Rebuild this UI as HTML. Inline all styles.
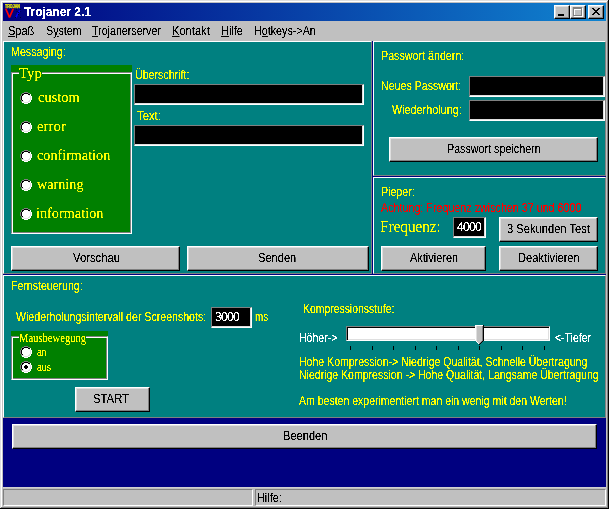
<!DOCTYPE html>
<html lang="de"><head><meta charset="utf-8"><title>Trojaner 2.1</title>
<style>
html,body{margin:0;padding:0}
body{width:609px;height:509px;overflow:hidden;background:#c0c0c0;position:relative;font-family:"Liberation Sans",sans-serif}
.a{position:absolute;box-sizing:border-box}
.t{position:absolute;white-space:nowrap;line-height:20px;transform-origin:0 0}
.p{position:absolute;box-sizing:border-box;background:#008080;border:1px solid;border-color:#fff #808080 #808080 #fff}
.b{position:absolute;box-sizing:border-box;background:#c0c0c0;border:1px solid;border-color:#fff #000 #000 #fff;box-shadow:inset -1px -1px 0 #808080,inset 1px 1px 0 #dfdfdf}
.e{position:absolute;box-sizing:border-box;background:#000;border:1px solid;border-color:#808080 #fff #fff #808080;box-shadow:inset -1px -1px 0 #dfdfdf,inset 1px 1px 0 #000}
.g{position:absolute;box-sizing:border-box;background:#008000}
.f{position:absolute;box-sizing:border-box;border:1px solid;border-color:#808080 #fff #fff #808080;box-shadow:inset 1px 1px 0 #fff,inset -1px -1px 0 #808080}
.sp{position:absolute;box-sizing:border-box;border:1px solid;border-color:#808080 #fff #fff #808080}
u{text-decoration:underline}
</style></head><body>

<div class="a" style="left:0;top:0;width:609px;height:509px;background:#000"></div>
<div class="a" style="left:0;top:0;width:608px;height:508px;background:#dfdfdf"></div>
<div class="a" style="left:1px;top:1px;width:607px;height:507px;background:#808080"></div>
<div class="a" style="left:1px;top:1px;width:606px;height:506px;background:#fff"></div>
<div class="a" style="left:2px;top:2px;width:605px;height:505px;background:#c0c0c0"></div>
<div class="a" style="left:3px;top:3px;width:603px;height:18px;background:linear-gradient(to right,#000080,#1084d0)"></div>
<svg class="a" style="left:5px;top:4px" width="16" height="16" viewBox="0 0 16 16"><text x="0" y="3.9" font-family="Liberation Sans, sans-serif" font-weight="bold" font-size="5.2" fill="#ffff00" stroke="#e0e000" stroke-width="0.35" opacity="0.99" textLength="15" lengthAdjust="spacingAndGlyphs">TROJAN</text><path d="M0.7 4.6 L4.5 13.4 L8.3 4.6" stroke="#ff0000" stroke-width="1.7" fill="none" stroke-linejoin="bevel"/><path d="M14.8 6.3 L10.7 13.7" stroke="#0000ff" stroke-width="1.6" fill="none"/><path d="M11 5.5h1M15 5.5h1M11.5 7.5h1M15.5 7.5h1M13 8.5h1M13 10.5h1M10 13.5h1M15 13.5h1" stroke="#000030" stroke-width="1" fill="none"/></svg>
<div class="b" style="left:554px;top:5px;width:16px;height:14px"></div>
<div class="b" style="left:570px;top:5px;width:16px;height:14px"></div>
<div class="b" style="left:588px;top:5px;width:16px;height:14px"></div>
<div class="a" style="left:558px;top:14px;width:6px;height:2px;background:#000"></div>
<div class="a" style="left:574px;top:8px;width:9px;height:9px;border:1px solid #fff;border-top-width:2px"></div>
<div class="a" style="left:573px;top:7px;width:9px;height:9px;border:1px solid #808080;border-top-width:2px"></div>
<svg class="a" style="left:592px;top:8px" width="8" height="7" viewBox="0 0 8 7" shape-rendering="crispEdges"><path d="M0 0h2v1h-2zM6 0h2v1h-2zM1 1h2v1h-2zM5 1h2v1h-2zM2 2h4v1h-4zM3 3h2v1h-2zM2 4h4v1h-4zM1 5h2v1h-2zM5 5h2v1h-2zM0 6h2v1h-2zM6 6h2v1h-2z" fill="#000"/></svg>
<div class="a" style="left:3px;top:41px;width:603px;height:465px;background:#000080"></div>
<div class="p" style="left:3px;top:41px;width:369px;height:233px"></div>
<div class="p" style="left:373px;top:41px;width:233px;height:135px"></div>
<div class="p" style="left:373px;top:177px;width:233px;height:97px"></div>
<div class="p" style="left:3px;top:275px;width:603px;height:143px"></div>
<div class="g" style="left:11px;top:65px;width:121px;height:169px"></div>
<div class="f" style="left:11px;top:72px;width:121px;height:162px"></div>
<div class="a" style="left:19px;top:72px;width:23px;height:2px;background:#008000"></div>
<svg class="a" style="left:20px;top:92px" width="12" height="12" viewBox="0 0 12 12" shape-rendering="crispEdges"><rect x="4" y="2" width="4" height="1" fill="#fff"/><rect x="3" y="3" width="6" height="1" fill="#fff"/><rect x="2" y="4" width="8" height="1" fill="#fff"/><rect x="2" y="5" width="8" height="1" fill="#fff"/><rect x="2" y="6" width="8" height="1" fill="#fff"/><rect x="2" y="7" width="8" height="1" fill="#fff"/><rect x="3" y="8" width="6" height="1" fill="#fff"/><rect x="4" y="9" width="4" height="1" fill="#fff"/><rect x="4" y="0" width="4" height="1" fill="#808080"/><rect x="2" y="1" width="2" height="1" fill="#808080"/><rect x="8" y="1" width="2" height="1" fill="#808080"/><rect x="1" y="2" width="1" height="1" fill="#808080"/><rect x="1" y="3" width="1" height="1" fill="#808080"/><rect x="0" y="4" width="1" height="1" fill="#808080"/><rect x="0" y="5" width="1" height="1" fill="#808080"/><rect x="0" y="6" width="1" height="1" fill="#808080"/><rect x="0" y="7" width="1" height="1" fill="#808080"/><rect x="1" y="8" width="1" height="1" fill="#808080"/><rect x="1" y="9" width="1" height="1" fill="#808080"/><rect x="4" y="1" width="4" height="1" fill="#000"/><rect x="2" y="2" width="2" height="1" fill="#000"/><rect x="8" y="2" width="2" height="1" fill="#000"/><rect x="2" y="3" width="1" height="1" fill="#000"/><rect x="1" y="4" width="1" height="1" fill="#000"/><rect x="1" y="5" width="1" height="1" fill="#000"/><rect x="1" y="6" width="1" height="1" fill="#000"/><rect x="1" y="7" width="1" height="1" fill="#000"/><rect x="2" y="8" width="1" height="1" fill="#000"/><rect x="10" y="2" width="1" height="1" fill="#fff"/><rect x="10" y="3" width="1" height="1" fill="#fff"/><rect x="11" y="4" width="1" height="1" fill="#fff"/><rect x="11" y="5" width="1" height="1" fill="#fff"/><rect x="11" y="6" width="1" height="1" fill="#fff"/><rect x="11" y="7" width="1" height="1" fill="#fff"/><rect x="10" y="8" width="1" height="1" fill="#fff"/><rect x="10" y="9" width="1" height="1" fill="#fff"/><rect x="2" y="10" width="2" height="1" fill="#fff"/><rect x="8" y="10" width="2" height="1" fill="#fff"/><rect x="4" y="11" width="4" height="1" fill="#fff"/><rect x="9" y="3" width="1" height="1" fill="#dfdfdf"/><rect x="10" y="4" width="1" height="1" fill="#dfdfdf"/><rect x="10" y="5" width="1" height="1" fill="#dfdfdf"/><rect x="10" y="6" width="1" height="1" fill="#dfdfdf"/><rect x="10" y="7" width="1" height="1" fill="#dfdfdf"/><rect x="9" y="8" width="1" height="1" fill="#dfdfdf"/><rect x="2" y="9" width="2" height="1" fill="#dfdfdf"/><rect x="8" y="9" width="2" height="1" fill="#dfdfdf"/><rect x="4" y="10" width="4" height="1" fill="#dfdfdf"/></svg>
<svg class="a" style="left:20px;top:121px" width="12" height="12" viewBox="0 0 12 12" shape-rendering="crispEdges"><rect x="4" y="2" width="4" height="1" fill="#fff"/><rect x="3" y="3" width="6" height="1" fill="#fff"/><rect x="2" y="4" width="8" height="1" fill="#fff"/><rect x="2" y="5" width="8" height="1" fill="#fff"/><rect x="2" y="6" width="8" height="1" fill="#fff"/><rect x="2" y="7" width="8" height="1" fill="#fff"/><rect x="3" y="8" width="6" height="1" fill="#fff"/><rect x="4" y="9" width="4" height="1" fill="#fff"/><rect x="4" y="0" width="4" height="1" fill="#808080"/><rect x="2" y="1" width="2" height="1" fill="#808080"/><rect x="8" y="1" width="2" height="1" fill="#808080"/><rect x="1" y="2" width="1" height="1" fill="#808080"/><rect x="1" y="3" width="1" height="1" fill="#808080"/><rect x="0" y="4" width="1" height="1" fill="#808080"/><rect x="0" y="5" width="1" height="1" fill="#808080"/><rect x="0" y="6" width="1" height="1" fill="#808080"/><rect x="0" y="7" width="1" height="1" fill="#808080"/><rect x="1" y="8" width="1" height="1" fill="#808080"/><rect x="1" y="9" width="1" height="1" fill="#808080"/><rect x="4" y="1" width="4" height="1" fill="#000"/><rect x="2" y="2" width="2" height="1" fill="#000"/><rect x="8" y="2" width="2" height="1" fill="#000"/><rect x="2" y="3" width="1" height="1" fill="#000"/><rect x="1" y="4" width="1" height="1" fill="#000"/><rect x="1" y="5" width="1" height="1" fill="#000"/><rect x="1" y="6" width="1" height="1" fill="#000"/><rect x="1" y="7" width="1" height="1" fill="#000"/><rect x="2" y="8" width="1" height="1" fill="#000"/><rect x="10" y="2" width="1" height="1" fill="#fff"/><rect x="10" y="3" width="1" height="1" fill="#fff"/><rect x="11" y="4" width="1" height="1" fill="#fff"/><rect x="11" y="5" width="1" height="1" fill="#fff"/><rect x="11" y="6" width="1" height="1" fill="#fff"/><rect x="11" y="7" width="1" height="1" fill="#fff"/><rect x="10" y="8" width="1" height="1" fill="#fff"/><rect x="10" y="9" width="1" height="1" fill="#fff"/><rect x="2" y="10" width="2" height="1" fill="#fff"/><rect x="8" y="10" width="2" height="1" fill="#fff"/><rect x="4" y="11" width="4" height="1" fill="#fff"/><rect x="9" y="3" width="1" height="1" fill="#dfdfdf"/><rect x="10" y="4" width="1" height="1" fill="#dfdfdf"/><rect x="10" y="5" width="1" height="1" fill="#dfdfdf"/><rect x="10" y="6" width="1" height="1" fill="#dfdfdf"/><rect x="10" y="7" width="1" height="1" fill="#dfdfdf"/><rect x="9" y="8" width="1" height="1" fill="#dfdfdf"/><rect x="2" y="9" width="2" height="1" fill="#dfdfdf"/><rect x="8" y="9" width="2" height="1" fill="#dfdfdf"/><rect x="4" y="10" width="4" height="1" fill="#dfdfdf"/></svg>
<svg class="a" style="left:20px;top:150px" width="12" height="12" viewBox="0 0 12 12" shape-rendering="crispEdges"><rect x="4" y="2" width="4" height="1" fill="#fff"/><rect x="3" y="3" width="6" height="1" fill="#fff"/><rect x="2" y="4" width="8" height="1" fill="#fff"/><rect x="2" y="5" width="8" height="1" fill="#fff"/><rect x="2" y="6" width="8" height="1" fill="#fff"/><rect x="2" y="7" width="8" height="1" fill="#fff"/><rect x="3" y="8" width="6" height="1" fill="#fff"/><rect x="4" y="9" width="4" height="1" fill="#fff"/><rect x="4" y="0" width="4" height="1" fill="#808080"/><rect x="2" y="1" width="2" height="1" fill="#808080"/><rect x="8" y="1" width="2" height="1" fill="#808080"/><rect x="1" y="2" width="1" height="1" fill="#808080"/><rect x="1" y="3" width="1" height="1" fill="#808080"/><rect x="0" y="4" width="1" height="1" fill="#808080"/><rect x="0" y="5" width="1" height="1" fill="#808080"/><rect x="0" y="6" width="1" height="1" fill="#808080"/><rect x="0" y="7" width="1" height="1" fill="#808080"/><rect x="1" y="8" width="1" height="1" fill="#808080"/><rect x="1" y="9" width="1" height="1" fill="#808080"/><rect x="4" y="1" width="4" height="1" fill="#000"/><rect x="2" y="2" width="2" height="1" fill="#000"/><rect x="8" y="2" width="2" height="1" fill="#000"/><rect x="2" y="3" width="1" height="1" fill="#000"/><rect x="1" y="4" width="1" height="1" fill="#000"/><rect x="1" y="5" width="1" height="1" fill="#000"/><rect x="1" y="6" width="1" height="1" fill="#000"/><rect x="1" y="7" width="1" height="1" fill="#000"/><rect x="2" y="8" width="1" height="1" fill="#000"/><rect x="10" y="2" width="1" height="1" fill="#fff"/><rect x="10" y="3" width="1" height="1" fill="#fff"/><rect x="11" y="4" width="1" height="1" fill="#fff"/><rect x="11" y="5" width="1" height="1" fill="#fff"/><rect x="11" y="6" width="1" height="1" fill="#fff"/><rect x="11" y="7" width="1" height="1" fill="#fff"/><rect x="10" y="8" width="1" height="1" fill="#fff"/><rect x="10" y="9" width="1" height="1" fill="#fff"/><rect x="2" y="10" width="2" height="1" fill="#fff"/><rect x="8" y="10" width="2" height="1" fill="#fff"/><rect x="4" y="11" width="4" height="1" fill="#fff"/><rect x="9" y="3" width="1" height="1" fill="#dfdfdf"/><rect x="10" y="4" width="1" height="1" fill="#dfdfdf"/><rect x="10" y="5" width="1" height="1" fill="#dfdfdf"/><rect x="10" y="6" width="1" height="1" fill="#dfdfdf"/><rect x="10" y="7" width="1" height="1" fill="#dfdfdf"/><rect x="9" y="8" width="1" height="1" fill="#dfdfdf"/><rect x="2" y="9" width="2" height="1" fill="#dfdfdf"/><rect x="8" y="9" width="2" height="1" fill="#dfdfdf"/><rect x="4" y="10" width="4" height="1" fill="#dfdfdf"/></svg>
<svg class="a" style="left:20px;top:179px" width="12" height="12" viewBox="0 0 12 12" shape-rendering="crispEdges"><rect x="4" y="2" width="4" height="1" fill="#fff"/><rect x="3" y="3" width="6" height="1" fill="#fff"/><rect x="2" y="4" width="8" height="1" fill="#fff"/><rect x="2" y="5" width="8" height="1" fill="#fff"/><rect x="2" y="6" width="8" height="1" fill="#fff"/><rect x="2" y="7" width="8" height="1" fill="#fff"/><rect x="3" y="8" width="6" height="1" fill="#fff"/><rect x="4" y="9" width="4" height="1" fill="#fff"/><rect x="4" y="0" width="4" height="1" fill="#808080"/><rect x="2" y="1" width="2" height="1" fill="#808080"/><rect x="8" y="1" width="2" height="1" fill="#808080"/><rect x="1" y="2" width="1" height="1" fill="#808080"/><rect x="1" y="3" width="1" height="1" fill="#808080"/><rect x="0" y="4" width="1" height="1" fill="#808080"/><rect x="0" y="5" width="1" height="1" fill="#808080"/><rect x="0" y="6" width="1" height="1" fill="#808080"/><rect x="0" y="7" width="1" height="1" fill="#808080"/><rect x="1" y="8" width="1" height="1" fill="#808080"/><rect x="1" y="9" width="1" height="1" fill="#808080"/><rect x="4" y="1" width="4" height="1" fill="#000"/><rect x="2" y="2" width="2" height="1" fill="#000"/><rect x="8" y="2" width="2" height="1" fill="#000"/><rect x="2" y="3" width="1" height="1" fill="#000"/><rect x="1" y="4" width="1" height="1" fill="#000"/><rect x="1" y="5" width="1" height="1" fill="#000"/><rect x="1" y="6" width="1" height="1" fill="#000"/><rect x="1" y="7" width="1" height="1" fill="#000"/><rect x="2" y="8" width="1" height="1" fill="#000"/><rect x="10" y="2" width="1" height="1" fill="#fff"/><rect x="10" y="3" width="1" height="1" fill="#fff"/><rect x="11" y="4" width="1" height="1" fill="#fff"/><rect x="11" y="5" width="1" height="1" fill="#fff"/><rect x="11" y="6" width="1" height="1" fill="#fff"/><rect x="11" y="7" width="1" height="1" fill="#fff"/><rect x="10" y="8" width="1" height="1" fill="#fff"/><rect x="10" y="9" width="1" height="1" fill="#fff"/><rect x="2" y="10" width="2" height="1" fill="#fff"/><rect x="8" y="10" width="2" height="1" fill="#fff"/><rect x="4" y="11" width="4" height="1" fill="#fff"/><rect x="9" y="3" width="1" height="1" fill="#dfdfdf"/><rect x="10" y="4" width="1" height="1" fill="#dfdfdf"/><rect x="10" y="5" width="1" height="1" fill="#dfdfdf"/><rect x="10" y="6" width="1" height="1" fill="#dfdfdf"/><rect x="10" y="7" width="1" height="1" fill="#dfdfdf"/><rect x="9" y="8" width="1" height="1" fill="#dfdfdf"/><rect x="2" y="9" width="2" height="1" fill="#dfdfdf"/><rect x="8" y="9" width="2" height="1" fill="#dfdfdf"/><rect x="4" y="10" width="4" height="1" fill="#dfdfdf"/></svg>
<svg class="a" style="left:20px;top:208px" width="12" height="12" viewBox="0 0 12 12" shape-rendering="crispEdges"><rect x="4" y="2" width="4" height="1" fill="#fff"/><rect x="3" y="3" width="6" height="1" fill="#fff"/><rect x="2" y="4" width="8" height="1" fill="#fff"/><rect x="2" y="5" width="8" height="1" fill="#fff"/><rect x="2" y="6" width="8" height="1" fill="#fff"/><rect x="2" y="7" width="8" height="1" fill="#fff"/><rect x="3" y="8" width="6" height="1" fill="#fff"/><rect x="4" y="9" width="4" height="1" fill="#fff"/><rect x="4" y="0" width="4" height="1" fill="#808080"/><rect x="2" y="1" width="2" height="1" fill="#808080"/><rect x="8" y="1" width="2" height="1" fill="#808080"/><rect x="1" y="2" width="1" height="1" fill="#808080"/><rect x="1" y="3" width="1" height="1" fill="#808080"/><rect x="0" y="4" width="1" height="1" fill="#808080"/><rect x="0" y="5" width="1" height="1" fill="#808080"/><rect x="0" y="6" width="1" height="1" fill="#808080"/><rect x="0" y="7" width="1" height="1" fill="#808080"/><rect x="1" y="8" width="1" height="1" fill="#808080"/><rect x="1" y="9" width="1" height="1" fill="#808080"/><rect x="4" y="1" width="4" height="1" fill="#000"/><rect x="2" y="2" width="2" height="1" fill="#000"/><rect x="8" y="2" width="2" height="1" fill="#000"/><rect x="2" y="3" width="1" height="1" fill="#000"/><rect x="1" y="4" width="1" height="1" fill="#000"/><rect x="1" y="5" width="1" height="1" fill="#000"/><rect x="1" y="6" width="1" height="1" fill="#000"/><rect x="1" y="7" width="1" height="1" fill="#000"/><rect x="2" y="8" width="1" height="1" fill="#000"/><rect x="10" y="2" width="1" height="1" fill="#fff"/><rect x="10" y="3" width="1" height="1" fill="#fff"/><rect x="11" y="4" width="1" height="1" fill="#fff"/><rect x="11" y="5" width="1" height="1" fill="#fff"/><rect x="11" y="6" width="1" height="1" fill="#fff"/><rect x="11" y="7" width="1" height="1" fill="#fff"/><rect x="10" y="8" width="1" height="1" fill="#fff"/><rect x="10" y="9" width="1" height="1" fill="#fff"/><rect x="2" y="10" width="2" height="1" fill="#fff"/><rect x="8" y="10" width="2" height="1" fill="#fff"/><rect x="4" y="11" width="4" height="1" fill="#fff"/><rect x="9" y="3" width="1" height="1" fill="#dfdfdf"/><rect x="10" y="4" width="1" height="1" fill="#dfdfdf"/><rect x="10" y="5" width="1" height="1" fill="#dfdfdf"/><rect x="10" y="6" width="1" height="1" fill="#dfdfdf"/><rect x="10" y="7" width="1" height="1" fill="#dfdfdf"/><rect x="9" y="8" width="1" height="1" fill="#dfdfdf"/><rect x="2" y="9" width="2" height="1" fill="#dfdfdf"/><rect x="8" y="9" width="2" height="1" fill="#dfdfdf"/><rect x="4" y="10" width="4" height="1" fill="#dfdfdf"/></svg>
<div class="e" style="left:134px;top:84px;width:230px;height:21px"></div>
<div class="e" style="left:134px;top:125px;width:230px;height:21px"></div>
<div class="b" style="left:11px;top:246px;width:169px;height:25px"></div>
<div class="b" style="left:187px;top:246px;width:182px;height:25px"></div>
<div class="e" style="left:469px;top:76px;width:136px;height:21px"></div>
<div class="e" style="left:469px;top:100px;width:136px;height:21px"></div>
<div class="b" style="left:389px;top:137px;width:209px;height:25px"></div>
<div class="e" style="left:453px;top:217px;width:33px;height:21px"></div>
<div class="b" style="left:499px;top:217px;width:99px;height:25px"></div>
<div class="b" style="left:381px;top:246px;width:105px;height:25px"></div>
<div class="b" style="left:499px;top:246px;width:99px;height:25px"></div>
<div class="e" style="left:211px;top:307px;width:41px;height:21px"></div>
<div class="g" style="left:11px;top:331px;width:97px;height:49px"></div>
<div class="f" style="left:11px;top:336px;width:97px;height:44px"></div>
<div class="a" style="left:19px;top:336px;width:67px;height:2px;background:#008000"></div>
<svg class="a" style="left:20px;top:346px" width="12" height="12" viewBox="0 0 12 12" shape-rendering="crispEdges"><rect x="4" y="2" width="4" height="1" fill="#fff"/><rect x="3" y="3" width="6" height="1" fill="#fff"/><rect x="2" y="4" width="8" height="1" fill="#fff"/><rect x="2" y="5" width="8" height="1" fill="#fff"/><rect x="2" y="6" width="8" height="1" fill="#fff"/><rect x="2" y="7" width="8" height="1" fill="#fff"/><rect x="3" y="8" width="6" height="1" fill="#fff"/><rect x="4" y="9" width="4" height="1" fill="#fff"/><rect x="4" y="0" width="4" height="1" fill="#808080"/><rect x="2" y="1" width="2" height="1" fill="#808080"/><rect x="8" y="1" width="2" height="1" fill="#808080"/><rect x="1" y="2" width="1" height="1" fill="#808080"/><rect x="1" y="3" width="1" height="1" fill="#808080"/><rect x="0" y="4" width="1" height="1" fill="#808080"/><rect x="0" y="5" width="1" height="1" fill="#808080"/><rect x="0" y="6" width="1" height="1" fill="#808080"/><rect x="0" y="7" width="1" height="1" fill="#808080"/><rect x="1" y="8" width="1" height="1" fill="#808080"/><rect x="1" y="9" width="1" height="1" fill="#808080"/><rect x="4" y="1" width="4" height="1" fill="#000"/><rect x="2" y="2" width="2" height="1" fill="#000"/><rect x="8" y="2" width="2" height="1" fill="#000"/><rect x="2" y="3" width="1" height="1" fill="#000"/><rect x="1" y="4" width="1" height="1" fill="#000"/><rect x="1" y="5" width="1" height="1" fill="#000"/><rect x="1" y="6" width="1" height="1" fill="#000"/><rect x="1" y="7" width="1" height="1" fill="#000"/><rect x="2" y="8" width="1" height="1" fill="#000"/><rect x="10" y="2" width="1" height="1" fill="#fff"/><rect x="10" y="3" width="1" height="1" fill="#fff"/><rect x="11" y="4" width="1" height="1" fill="#fff"/><rect x="11" y="5" width="1" height="1" fill="#fff"/><rect x="11" y="6" width="1" height="1" fill="#fff"/><rect x="11" y="7" width="1" height="1" fill="#fff"/><rect x="10" y="8" width="1" height="1" fill="#fff"/><rect x="10" y="9" width="1" height="1" fill="#fff"/><rect x="2" y="10" width="2" height="1" fill="#fff"/><rect x="8" y="10" width="2" height="1" fill="#fff"/><rect x="4" y="11" width="4" height="1" fill="#fff"/><rect x="9" y="3" width="1" height="1" fill="#dfdfdf"/><rect x="10" y="4" width="1" height="1" fill="#dfdfdf"/><rect x="10" y="5" width="1" height="1" fill="#dfdfdf"/><rect x="10" y="6" width="1" height="1" fill="#dfdfdf"/><rect x="10" y="7" width="1" height="1" fill="#dfdfdf"/><rect x="9" y="8" width="1" height="1" fill="#dfdfdf"/><rect x="2" y="9" width="2" height="1" fill="#dfdfdf"/><rect x="8" y="9" width="2" height="1" fill="#dfdfdf"/><rect x="4" y="10" width="4" height="1" fill="#dfdfdf"/></svg>
<svg class="a" style="left:20px;top:361px" width="12" height="12" viewBox="0 0 12 12" shape-rendering="crispEdges"><rect x="4" y="2" width="4" height="1" fill="#fff"/><rect x="3" y="3" width="6" height="1" fill="#fff"/><rect x="2" y="4" width="8" height="1" fill="#fff"/><rect x="2" y="5" width="8" height="1" fill="#fff"/><rect x="2" y="6" width="8" height="1" fill="#fff"/><rect x="2" y="7" width="8" height="1" fill="#fff"/><rect x="3" y="8" width="6" height="1" fill="#fff"/><rect x="4" y="9" width="4" height="1" fill="#fff"/><rect x="4" y="0" width="4" height="1" fill="#808080"/><rect x="2" y="1" width="2" height="1" fill="#808080"/><rect x="8" y="1" width="2" height="1" fill="#808080"/><rect x="1" y="2" width="1" height="1" fill="#808080"/><rect x="1" y="3" width="1" height="1" fill="#808080"/><rect x="0" y="4" width="1" height="1" fill="#808080"/><rect x="0" y="5" width="1" height="1" fill="#808080"/><rect x="0" y="6" width="1" height="1" fill="#808080"/><rect x="0" y="7" width="1" height="1" fill="#808080"/><rect x="1" y="8" width="1" height="1" fill="#808080"/><rect x="1" y="9" width="1" height="1" fill="#808080"/><rect x="4" y="1" width="4" height="1" fill="#000"/><rect x="2" y="2" width="2" height="1" fill="#000"/><rect x="8" y="2" width="2" height="1" fill="#000"/><rect x="2" y="3" width="1" height="1" fill="#000"/><rect x="1" y="4" width="1" height="1" fill="#000"/><rect x="1" y="5" width="1" height="1" fill="#000"/><rect x="1" y="6" width="1" height="1" fill="#000"/><rect x="1" y="7" width="1" height="1" fill="#000"/><rect x="2" y="8" width="1" height="1" fill="#000"/><rect x="10" y="2" width="1" height="1" fill="#fff"/><rect x="10" y="3" width="1" height="1" fill="#fff"/><rect x="11" y="4" width="1" height="1" fill="#fff"/><rect x="11" y="5" width="1" height="1" fill="#fff"/><rect x="11" y="6" width="1" height="1" fill="#fff"/><rect x="11" y="7" width="1" height="1" fill="#fff"/><rect x="10" y="8" width="1" height="1" fill="#fff"/><rect x="10" y="9" width="1" height="1" fill="#fff"/><rect x="2" y="10" width="2" height="1" fill="#fff"/><rect x="8" y="10" width="2" height="1" fill="#fff"/><rect x="4" y="11" width="4" height="1" fill="#fff"/><rect x="9" y="3" width="1" height="1" fill="#dfdfdf"/><rect x="10" y="4" width="1" height="1" fill="#dfdfdf"/><rect x="10" y="5" width="1" height="1" fill="#dfdfdf"/><rect x="10" y="6" width="1" height="1" fill="#dfdfdf"/><rect x="10" y="7" width="1" height="1" fill="#dfdfdf"/><rect x="9" y="8" width="1" height="1" fill="#dfdfdf"/><rect x="2" y="9" width="2" height="1" fill="#dfdfdf"/><rect x="8" y="9" width="2" height="1" fill="#dfdfdf"/><rect x="4" y="10" width="4" height="1" fill="#dfdfdf"/><rect x="5" y="4" width="2" height="1" fill="#000"/><rect x="4" y="5" width="4" height="1" fill="#000"/><rect x="4" y="6" width="4" height="1" fill="#000"/><rect x="5" y="7" width="2" height="1" fill="#000"/></svg>
<div class="b" style="left:75px;top:387px;width:75px;height:25px"></div>
<div class="a" style="left:346px;top:326px;width:204px;height:15px;background:#fff;border:1px solid;border-color:#808080 #fff #fff #808080;box-shadow:inset 1px 1px 0 #000,inset -1px -1px 0 #dfdfdf"></div>
<div class="a" style="left:350px;top:346px;width:1px;height:4px;background:#000"></div>
<div class="a" style="left:372px;top:346px;width:1px;height:4px;background:#000"></div>
<div class="a" style="left:393px;top:346px;width:1px;height:4px;background:#000"></div>
<div class="a" style="left:415px;top:346px;width:1px;height:4px;background:#000"></div>
<div class="a" style="left:436px;top:346px;width:1px;height:4px;background:#000"></div>
<div class="a" style="left:458px;top:346px;width:1px;height:4px;background:#000"></div>
<div class="a" style="left:479px;top:346px;width:1px;height:4px;background:#000"></div>
<div class="a" style="left:501px;top:346px;width:1px;height:4px;background:#000"></div>
<div class="a" style="left:522px;top:346px;width:1px;height:4px;background:#000"></div>
<div class="a" style="left:544px;top:346px;width:1px;height:4px;background:#000"></div>
<svg class="a" style="left:475px;top:325px" width="9" height="20" viewBox="0 0 9 20" shape-rendering="crispEdges"><rect x="0" y="0" width="8" height="1" fill="#fff"/><rect x="8" y="0" width="1" height="16" fill="#000"/><rect x="0" y="1" width="1" height="15" fill="#fff"/><rect x="1" y="1" width="1" height="15" fill="#dfdfdf"/><rect x="2" y="1" width="5" height="15" fill="#c0c0c0"/><rect x="7" y="1" width="1" height="15" fill="#808080"/><rect x="1" y="16" width="1" height="1" fill="#fff"/><rect x="2" y="16" width="4" height="1" fill="#c0c0c0"/><rect x="6" y="16" width="1" height="1" fill="#808080"/><rect x="7" y="16" width="1" height="1" fill="#000"/><rect x="2" y="17" width="1" height="1" fill="#fff"/><rect x="3" y="17" width="2" height="1" fill="#c0c0c0"/><rect x="5" y="17" width="1" height="1" fill="#808080"/><rect x="6" y="17" width="1" height="1" fill="#000"/><rect x="3" y="18" width="1" height="1" fill="#fff"/><rect x="4" y="18" width="1" height="1" fill="#808080"/><rect x="5" y="18" width="1" height="1" fill="#000"/><rect x="4" y="19" width="1" height="1" fill="#000"/></svg>
<div class="b" style="left:12px;top:424px;width:585px;height:25px"></div>
<div class="a" style="left:3px;top:487px;width:603px;height:19px;background:#c0c0c0"></div>
<div class="a" style="left:3px;top:487px;width:603px;height:1px;background:#d0d0d0"></div>
<div class="sp" style="left:3px;top:489px;width:250px;height:17px"></div>
<div class="sp" style="left:255px;top:489px;width:351px;height:17px"></div>
<svg width="0" height="0" style="position:absolute"><filter id="ts" x="0" y="0" width="100%" height="100%" color-interpolation-filters="sRGB"><feComponentTransfer><feFuncA type="linear" slope="8" intercept="-2.9"/></feComponentTransfer></filter><filter id="tr" x="0" y="0" width="100%" height="100%" color-interpolation-filters="sRGB"><feComponentTransfer><feFuncA type="linear" slope="4" intercept="-1.25"/></feComponentTransfer></filter><filter id="tc" x="0" y="0" width="100%" height="100%" color-interpolation-filters="sRGB"><feComponentTransfer><feFuncA type="linear" slope="4" intercept="-1.6"/></feComponentTransfer></filter></svg>
<div class="a" style="left:0;top:0;width:609px;height:509px;filter:url(#ts)">
<span class="t" style="left:23.90px;top:2px;font:bold 12px 'Liberation Sans', sans-serif;line-height:20px;color:#fff;transform:scaleX(0.9925)">Trojaner 2.1</span>
<span class="t" style="left:8.28px;top:21px;font:normal 12px 'Liberation Sans', sans-serif;line-height:20px;color:#000;transform:scaleX(0.9185)"><u>S</u>paß</span>
<span class="t" style="left:45.71px;top:21px;font:normal 12px 'Liberation Sans', sans-serif;line-height:20px;color:#000;transform:scaleX(0.8895)">S<u>y</u>stem</span>
<span class="t" style="left:92.20px;top:21px;font:normal 12px 'Liberation Sans', sans-serif;line-height:20px;color:#000;transform:scaleX(0.8883)"><u>T</u>rojanerserver</span>
<span class="t" style="left:171.67px;top:21px;font:normal 12px 'Liberation Sans', sans-serif;line-height:20px;color:#000;transform:scaleX(0.9275)"><u>K</u>ontakt</span>
<span class="t" style="left:220.59px;top:21px;font:normal 12px 'Liberation Sans', sans-serif;line-height:20px;color:#000;transform:scaleX(0.9087)"><u>H</u>ilfe</span>
<span class="t" style="left:254.10px;top:21px;font:normal 12px 'Liberation Sans', sans-serif;line-height:20px;color:#000;transform:scaleX(0.8955)">H<u>o</u>tkeys-&gt;An</span>
<span class="t" style="left:10.81px;top:42px;font:normal 12px 'Liberation Sans', sans-serif;line-height:20px;color:#ffff00;transform:scaleX(0.8898)">Messaging:</span>
<span class="t" style="left:135.11px;top:65px;font:normal 12px 'Liberation Sans', sans-serif;line-height:20px;color:#ffff00;transform:scaleX(0.8864)">Überschrift:</span>
<span class="t" style="left:137.00px;top:106px;font:normal 12px 'Liberation Sans', sans-serif;line-height:20px;color:#ffff00;transform:scaleX(0.9375)">Text:</span>
<span class="t" style="left:72.80px;top:248px;font:normal 12px 'Liberation Sans', sans-serif;line-height:20px;color:#000;transform:scaleX(0.9388)">Vorschau</span>
<span class="t" style="left:258.07px;top:248px;font:normal 12px 'Liberation Sans', sans-serif;line-height:20px;color:#000;transform:scaleX(0.9250)">Senden</span>
<span class="t" style="left:380.61px;top:46px;font:normal 12px 'Liberation Sans', sans-serif;line-height:20px;color:#ffff00;transform:scaleX(0.8923)">Passwort ändern:</span>
<span class="t" style="left:381.01px;top:76px;font:normal 12px 'Liberation Sans', sans-serif;line-height:20px;color:#ffff00;transform:scaleX(0.8854)">Neues Passwort:</span>
<span class="t" style="left:392.30px;top:100px;font:normal 12px 'Liberation Sans', sans-serif;line-height:20px;color:#ffff00;transform:scaleX(0.9000)">Wiederholung:</span>
<span class="t" style="left:446.81px;top:139px;font:normal 12px 'Liberation Sans', sans-serif;line-height:20px;color:#000;transform:scaleX(0.8942)">Passwort speichern</span>
<span class="t" style="left:380.61px;top:182px;font:normal 12px 'Liberation Sans', sans-serif;line-height:20px;color:#ffff00;transform:scaleX(0.8861)">Pieper:</span>
<span class="t" style="left:381.00px;top:198px;font:normal 12px 'Liberation Sans', sans-serif;line-height:20px;color:#ff0000;transform:scaleX(0.8942)">Achtung: Frequenz zwischen 37 und 6000</span>
<span class="t" style="left:457.00px;top:217px;font:normal 12px 'Liberation Sans', sans-serif;line-height:20px;color:#fff;letter-spacing:-0.67px;">4000</span>
<span class="t" style="left:506.77px;top:219px;font:normal 12px 'Liberation Sans', sans-serif;line-height:20px;color:#000;transform:scaleX(0.9295)">3 Sekunden Test</span>
<span class="t" style="left:409.80px;top:248px;font:normal 12px 'Liberation Sans', sans-serif;line-height:20px;color:#000;transform:scaleX(0.9135)">Aktivieren</span>
<span class="t" style="left:517.68px;top:248px;font:normal 12px 'Liberation Sans', sans-serif;line-height:20px;color:#000;transform:scaleX(0.9246)">Deaktivieren</span>
<span class="t" style="left:10.82px;top:276px;font:normal 12px 'Liberation Sans', sans-serif;line-height:20px;color:#ffff00;transform:scaleX(0.8797)">Fernsteuerung:</span>
<span class="t" style="left:15.60px;top:307px;font:normal 12px 'Liberation Sans', sans-serif;line-height:20px;color:#ffff00;transform:scaleX(0.8827)">Wiederholungsintervall der Screenshots:</span>
<span class="t" style="left:215.00px;top:307px;font:normal 12px 'Liberation Sans', sans-serif;line-height:20px;color:#fff;letter-spacing:-0.67px;">3000</span>
<span class="t" style="left:254.99px;top:307px;font:normal 12px 'Liberation Sans', sans-serif;line-height:20px;color:#ffff00;transform:scaleX(0.8133)">ms</span>
<span class="t" style="left:36.90px;top:342px;font:normal 11px 'Liberation Sans', sans-serif;line-height:20px;color:#ffff00;transform:scaleX(0.7583)">an</span>
<span class="t" style="left:36.90px;top:357px;font:normal 11px 'Liberation Sans', sans-serif;line-height:20px;color:#ffff00;transform:scaleX(0.7882)">aus</span>
<span class="t" style="left:93.36px;top:389px;font:normal 12px 'Liberation Sans', sans-serif;line-height:20px;color:#000;transform:scaleX(0.9432)">START</span>
<span class="t" style="left:302.83px;top:299px;font:normal 12px 'Liberation Sans', sans-serif;line-height:20px;color:#ffff00;transform:scaleX(0.8670)">Kompressionsstufe:</span>
<span class="t" style="left:299.12px;top:328px;font:normal 12px 'Liberation Sans', sans-serif;line-height:20px;color:#fff;transform:scaleX(0.8762)">Höher-&gt;</span>
<span class="t" style="left:555.03px;top:328px;font:normal 12px 'Liberation Sans', sans-serif;line-height:20px;color:#fff;transform:scaleX(0.8725)">&lt;-Tiefer</span>
<span class="t" style="left:299.12px;top:352px;font:normal 12px 'Liberation Sans', sans-serif;line-height:20px;color:#ffff00;transform:scaleX(0.8777)">Hohe Kompression-&gt; Niedrige Qualität, Schnelle Übertragung</span>
<span class="t" style="left:299.12px;top:365px;font:normal 12px 'Liberation Sans', sans-serif;line-height:20px;color:#ffff00;transform:scaleX(0.8765)">Niedrige Kompression -&gt; Hohe Qualität, Langsame Übertragung</span>
<span class="t" style="left:299.00px;top:391px;font:normal 12px 'Liberation Sans', sans-serif;line-height:20px;color:#ffff00;transform:scaleX(0.8766)">Am besten experimentiert man ein wenig mit den Werten!</span>
<span class="t" style="left:282.88px;top:426px;font:normal 12px 'Liberation Sans', sans-serif;line-height:20px;color:#000;transform:scaleX(0.9239)">Beenden</span>
<span class="t" style="left:256.80px;top:488px;font:normal 12px 'Liberation Sans', sans-serif;line-height:20px;color:#000;transform:scaleX(0.9040)">Hilfe:</span>
</div>
<div class="a" style="left:0;top:0;width:609px;height:509px;filter:url(#tr)">
<span class="t" style="left:18.90px;top:64px;font:normal 14px 'Liberation Serif', serif;line-height:20px;color:#ffff00;transform:scaleX(1.0619)">Typ</span>
<span class="t" style="left:37.60px;top:88px;font:normal 14px 'Liberation Serif', serif;line-height:20px;color:#ffff00;transform:scaleX(1.0350)">custom</span>
<span class="t" style="left:36.54px;top:117px;font:normal 14px 'Liberation Serif', serif;line-height:20px;color:#ffff00;transform:scaleX(1.0615)">error</span>
<span class="t" style="left:37.40px;top:146px;font:normal 14px 'Liberation Serif', serif;line-height:20px;color:#ffff00;transform:scaleX(1.0125)">confirmation</span>
<span class="t" style="left:37.40px;top:175px;font:normal 14px 'Liberation Serif', serif;line-height:20px;color:#ffff00;transform:scaleX(1.0130)">warning</span>
<span class="t" style="left:35.78px;top:204px;font:normal 14px 'Liberation Serif', serif;line-height:20px;color:#ffff00;transform:scaleX(1.0200)">information</span>
<span class="t" style="left:19.12px;top:328px;font:normal 12px 'Liberation Serif', serif;line-height:20px;color:#ffff00;transform:scaleX(0.8827)">Mausbewegung</span>
</div>
<div class="a" style="left:0;top:0;width:609px;height:509px;filter:url(#tc)">
<span class="t" style="left:380.00px;top:217px;font:normal 16px 'Liberation Serif', serif;line-height:20px;color:#ffff00;letter-spacing:-0.42px;">Frequenz:</span>
</div>
</body></html>
